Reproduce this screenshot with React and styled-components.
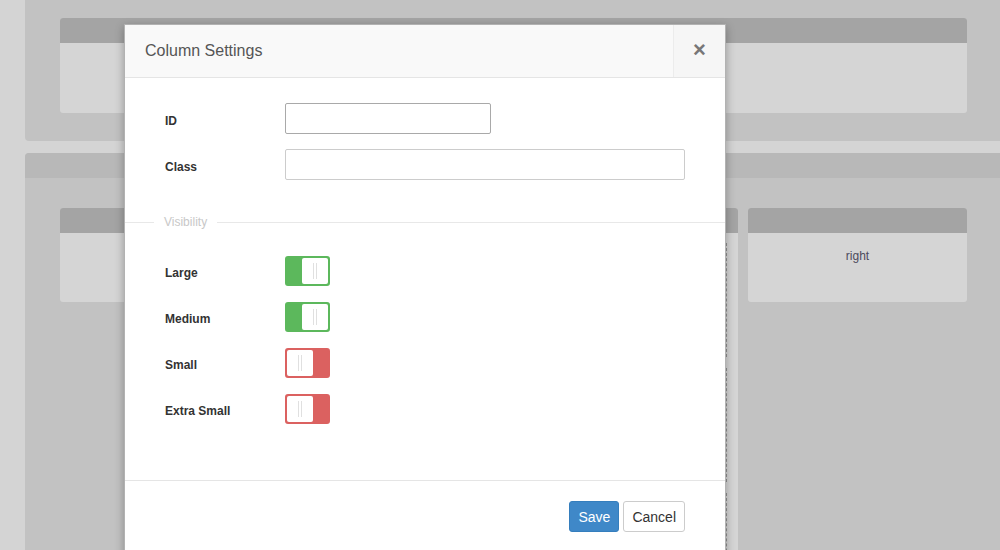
import React from 'react';
import styled, { createGlobalStyle } from 'styled-components';

const GlobalStyle = createGlobalStyle`
  html, body {
    margin: 0;
    padding: 0;
    background: #d4d4d4;
    overflow: hidden;
    font-family: "Liberation Sans", Arial, sans-serif;
    font-size: 12px;
  }
`;

const Page = styled.div`
  position: relative;
  width: 1000px;
  height: 550px;
  overflow: hidden;
  padding-left: 25px;
  box-sizing: border-box;
  display: flex;
  flex-direction: column;
  gap: 12px;
`;

const Section = styled.div`
  width: 1000px;
  background: #c2c2c2;
  border-radius: ${(p) => (p.$top ? '0 0 4px 4px' : '4px 4px 0 0')};
  height: ${(p) => p.$height}px;
  flex-shrink: 0;
  display: flex;
  flex-direction: column;
`;

const SectionHead = styled.div`
  height: 25px;
  background: #b8b8b8;
  border-radius: 4px 4px 0 0;
`;

const Row = styled.div`
  display: flex;
  gap: 10px;
  padding: ${(p) => p.$pad};
  align-items: flex-start;
`;

const Card = styled.div`
  width: ${(p) => p.$width}px;
  height: ${(p) => p.$height}px;
  background: #d5d5d5;
  border-radius: 3px;
  overflow: hidden;
  display: flex;
  flex-direction: column;
  flex-shrink: 0;
`;

const CardHead = styled.div`
  height: 25px;
  background: #a4a4a4;
  flex-shrink: 0;
`;

const CardBody = styled.div`
  flex: 1;
  padding: ${(p) => p.$pad || '16px 0 0'};
  text-align: center;
  color: #4d4b5c;
  font-size: 12px;
  display: flex;
  flex-direction: column;
  gap: 11px;
`;

const DropZone = styled.div`
  height: ${(p) => p.$height}px;
  border: 1px dashed #8f8f8f;
  margin-right: 11px;
  margin-left: 11px;
  flex-shrink: 0;
`;

const Modal = styled.div`
  position: absolute;
  left: 124px;
  top: 24px;
  width: 600px;
  height: 560px;
  background: #fff;
  border: 1px solid rgba(0, 0, 0, 0.3);
  box-shadow: 0 3px 9px rgba(0, 0, 0, 0.3);
  display: flex;
  flex-direction: column;
`;

const ModalHeader = styled.div`
  height: 52px;
  display: flex;
  align-items: stretch;
  background: #f9f9f9;
  border-bottom: 1px solid #e5e5e5;
`;

const Title = styled.h4`
  margin: 0;
  flex: 1;
  padding-left: 20px;
  display: flex;
  align-items: center;
  font-size: 16px;
  font-weight: normal;
  color: #555;
`;

const CloseButton = styled.button`
  width: 52px;
  border: none;
  border-left: 1px solid #ececec;
  background: #f6f6f6;
  color: #777;
  font-family: "Liberation Sans", Arial, sans-serif;
  font-size: 22px;
  font-weight: bold;
  line-height: 1;
  padding: 0 0 2px;
  cursor: pointer;
`;

const ModalBody = styled.div`
  padding: 25px 40px 0;
  display: flex;
  flex-direction: column;
  gap: 15px;
  height: 402px;
  box-sizing: border-box;
`;

const FieldRow = styled.div`
  display: flex;
  align-items: center;
`;

const Label = styled.label`
  width: 120px;
  padding-top: ${(p) => (p.$low ? '4px' : '3px')};
  font-size: 12px;
  font-weight: bold;
  color: #333;
`;

const Input = styled.input`
  width: ${(p) => p.$width};
  height: 31px;
  box-sizing: border-box;
  border: 1px solid ${(p) => p.$border || '#ccc'};
  border-radius: 2px;
  padding: 4px 8px;
  font-family: inherit;
  font-size: 12px;
`;

const Fieldset = styled.fieldset`
  margin: 20px -40px 0;
  padding: 27px 40px 0;
  border: none;
  border-top: 1px solid #e8e8e8;
  display: flex;
  flex-direction: column;
  gap: 16px;
`;

const Legend = styled.legend`
  margin-left: -11px;
  padding: 0 10px;
  color: #c8c8c8;
  font-size: 12px;
`;

const Toggle = styled.div`
  width: 45px;
  height: 30px;
  box-sizing: border-box;
  border: 2px solid ${(p) => (p.$on ? '#5cb85c' : '#db6160')};
  background: ${(p) => (p.$on ? '#5cb85c' : '#db6160')};
  border-radius: 3px;
  display: flex;
  justify-content: ${(p) => (p.$on ? 'flex-end' : 'flex-start')};
`;

const Knob = styled.div`
  width: 26px;
  height: 26px;
  background: #fff;
  border-radius: 2px;
  display: flex;
  justify-content: center;
  align-items: center;
  gap: 2px;

  &::before,
  &::after {
    content: '';
    width: 1px;
    height: 16px;
    background: #e0e0e0;
  }
`;

const ModalFooter = styled.div`
  border-top: 1px solid #e5e5e5;
  padding: 20px 40px;
  display: flex;
  justify-content: flex-end;
  gap: 4px;
`;

const Button = styled.button`
  height: 31px;
  padding: 0 8px;
  border-radius: 3px;
  font-family: "Liberation Sans", Arial, sans-serif;
  font-size: 14px;
  border: 1px solid ${(p) => (p.$primary ? '#357ebd' : '#ccc')};
  background: ${(p) => (p.$primary ? '#3f88c8' : '#fff')};
  color: ${(p) => (p.$primary ? '#fff' : '#333')};
  cursor: pointer;
`;

const visibility = [
  { label: 'Large', on: true },
  { label: 'Medium', on: true },
  { label: 'Small', on: false },
  { label: 'Extra Small', on: false },
];

export default function App() {
  return (
    <>
      <GlobalStyle />
      <Page>
        <Section $top $height={141}>
          <Row $pad="18px 0 0 35px">
            <Card $width={907} $height={95}>
              <CardHead />
              <CardBody />
            </Card>
          </Row>
        </Section>
        <Section $height={420}>
          <SectionHead />
          <Row $pad="30px 0 0 35px">
            <Card $width={220} $height={94}>
              <CardHead />
              <CardBody />
            </Card>
            <Card $width={448} $height={360}>
              <CardHead />
              <CardBody $pad="10px 0 0">
                <DropZone $height={112} />
                <DropZone $height={112} />
                <DropZone $height={112} />
              </CardBody>
            </Card>
            <Card $width={219} $height={94}>
              <CardHead />
              <CardBody>right</CardBody>
            </Card>
          </Row>
        </Section>

        <Modal>
          <ModalHeader>
            <Title>Column Settings</Title>
            <CloseButton>×</CloseButton>
          </ModalHeader>
          <ModalBody>
            <FieldRow>
              <Label $low>ID</Label>
              <Input $width="206px" $border="#a9a9a9" />
            </FieldRow>
            <FieldRow>
              <Label $low>Class</Label>
              <Input $width="400px" />
            </FieldRow>
            <Fieldset>
              <Legend>Visibility</Legend>
              {visibility.map((v) => (
                <FieldRow key={v.label}>
                  <Label>{v.label}</Label>
                  <Toggle $on={v.on}>
                    <Knob />
                  </Toggle>
                </FieldRow>
              ))}
            </Fieldset>
          </ModalBody>
          <ModalFooter>
            <Button $primary>Save</Button>
            <Button>Cancel</Button>
          </ModalFooter>
        </Modal>
      </Page>
    </>
  );
}
